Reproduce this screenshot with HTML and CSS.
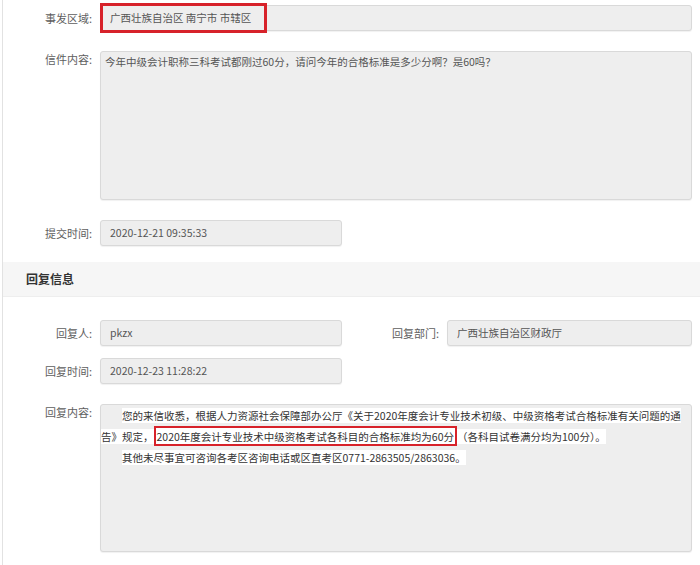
FILE: index.html
```html
<!DOCTYPE html>
<html lang="zh-CN">
<head>
    <meta charset="UTF-8">
    <title>信件详情</title>
    <link rel="stylesheet" href="styles.css">
</head>
<body>
    <div class="panel">
        <div class="form">
            <div class="field">
                <label class="field-label">事发区域:</label>
                <div class="field-box">
                    <div class="input">广西壮族自治区 南宁市 市辖区</div>
                    <span class="mark mark-area"></span>
                </div>
            </div>
            <div class="field top">
                <label class="field-label">信件内容:</label>
                <div class="field-box">
                    <div class="input textarea">今年中级会计职称三科考试都刚过60分，请问今年的合格标准是多少分啊？是60吗？</div>
                </div>
            </div>
            <div class="field last">
                <label class="field-label">提交时间:</label>
                <div class="field-box half">
                    <div class="input">2020-12-21 09:35:33</div>
                </div>
            </div>
        </div>

        <div class="section-title">回复信息</div>

        <div class="form">
            <div class="cols">
                <div class="field">
                    <label class="field-label">回复人:</label>
                    <div class="field-box">
                        <div class="input">pkzx</div>
                    </div>
                </div>
                <div class="field">
                    <label class="field-label">回复部门:</label>
                    <div class="field-box">
                        <div class="input">广西壮族自治区财政厅</div>
                    </div>
                </div>
            </div>
            <div class="field">
                <label class="field-label">回复时间:</label>
                <div class="field-box half">
                    <div class="input">2020-12-23 11:28:22</div>
                </div>
            </div>
            <div class="field top">
                <label class="field-label">回复内容:</label>
                <div class="field-box">
                    <div class="input textarea reply">
                        <p><span class="hl">您的来信收悉，根据人力资源社会保障部办公厅《关于2020年度会计专业技术初级、中级资格考试合格标准有关问题的通</span><span class="hl">告》规定，</span><span class="hl boxed">2020年度会计专业技术中级资格考试各科目的合格标准均为60分</span><span class="hl">（各科目试卷满分均为100分）。</span></p>
                        <p><span class="hl">其他未尽事宜可咨询各考区咨询电话或区直考区0771-2863505/2863036。</span></p>
                    </div>
                </div>
            </div>
        </div>
    </div>
</body>
</html>
```

FILE: styles.css
```css
body {
    margin: 0;
    font-family: "Noto Sans CJK SC", "Microsoft YaHei", sans-serif;
    font-size: 10.5px;
    color: #555;
    background: #fff;
}
.panel {
    margin-left: 2px;
    border-left: 1px solid #e2e2e2;
    min-height: 565px;
    padding-top: 5px;
}
.form {
    padding-right: 8px;
}
.field {
    display: flex;
    align-items: center;
    gap: 8px;
    margin-bottom: 20px;
}
.field.top {
    align-items: flex-start;
}
.field.last {
    margin-bottom: 16px;
}
.field-label {
    width: 89px;
    flex: none;
    text-align: right;
    color: #5e5e5e;
    font-size: 11px;
    line-height: 17px;
}
.field-box {
    flex: 1;
    position: relative;
}
.field-box.half {
    flex: none;
    width: 242px;
}
.input {
    height: 26px;
    box-sizing: border-box;
    border: 1px solid #d9d9d9;
    border-radius: 3px;
    background: #eee;
    padding: 0 9px;
    line-height: 24px;
    white-space: nowrap;
    box-shadow: 0 1px 1px rgba(0,0,0,0.06);
}
.textarea {
    height: 149px;
    padding: 0 4px;
    line-height: 20px;
    white-space: normal;
}
.reply {
    height: 148px;
    padding: 0 10px 0 0;
    line-height: 21px;
    color: #333;
}
.reply p {
    margin: 0;
    text-indent: 2em;
}
.hl {
    background: #fff;
}
.boxed {
    border: 2px solid #d7222a;
    padding: 1px 1px 0;
}
.mark {
    position: absolute;
    box-sizing: border-box;
    border: 3px solid #d7222a;
}
.mark-area {
    left: 0;
    top: -2px;
    width: 167px;
    height: 30px;
}
.section-title {
    background: #f6f6f6;
    border-bottom: 1px solid #eee;
    height: 34px;
    line-height: 34px;
    padding-left: 23px;
    font-size: 12px;
    font-weight: bold;
    color: #333;
    margin-bottom: 23px;
}
.cols {
    display: grid;
    grid-template-columns: 339px 342px;
    column-gap: 8px;
    margin-bottom: 12px;
}
.cols .field {
    margin-bottom: 0;
}
```
